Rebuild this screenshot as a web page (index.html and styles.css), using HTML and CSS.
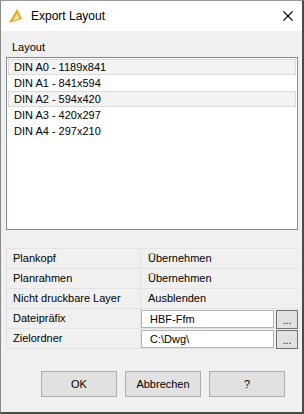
FILE: index.html
```html
<!DOCTYPE html>
<html lang="de">
<head>
    <meta charset="UTF-8">
    <title>Export Layout</title>
    <link rel="stylesheet" href="styles.css">
</head>
<body>
    <div class="window">
        <div class="titlebar">
            <svg class="app-icon" width="16" height="16" viewBox="0 0 16 16">
                <path d="M1 15 L9 1 L14 11 Z" fill="#f0a11c"/>
                <path d="M4.5 13 L9 5 L11.5 10.5 Z" fill="#fbe3b0"/>
            </svg>
            <span class="title">Export Layout</span>
            <svg class="close" width="10" height="10" viewBox="0 0 10 10">
                <path d="M0.5 0.5 L9.5 9.5 M9.5 0.5 L0.5 9.5" stroke="#000" stroke-width="1.1" fill="none"/>
            </svg>
        </div>

        <div class="content">
            <div class="group-label">Layout</div>
            <div class="listbox">
                <div class="list-item selected">DIN A0 - 1189x841</div>
                <div class="list-item">DIN A1 - 841x594</div>
                <div class="list-item selected">DIN A2 - 594x420</div>
                <div class="list-item">DIN A3 - 420x297</div>
                <div class="list-item">DIN A4 - 297x210</div>
            </div>

            <div class="props">
                <div class="prop-row">
                    <div class="prop-name">Plankopf</div>
                    <div class="prop-value">Übernehmen</div>
                </div>
                <div class="prop-row">
                    <div class="prop-name">Planrahmen</div>
                    <div class="prop-value">Übernehmen</div>
                </div>
                <div class="prop-row">
                    <div class="prop-name">Nicht druckbare Layer</div>
                    <div class="prop-value">Ausblenden</div>
                </div>
                <div class="prop-row">
                    <div class="prop-name">Dateipräfix</div>
                    <div class="prop-edit">
                        <div class="textbox">HBF-Ffm</div>
                        <div class="dots">...</div>
                    </div>
                </div>
                <div class="prop-row">
                    <div class="prop-name">Zielordner</div>
                    <div class="prop-edit">
                        <div class="textbox">C:\Dwg\</div>
                        <div class="dots">...</div>
                    </div>
                </div>
            </div>

            <div class="buttons">
                <div class="btn">OK</div>
                <div class="btn">Abbrechen</div>
                <div class="btn">?</div>
            </div>
        </div>
    </div>
</body>
</html>
```

FILE: styles.css
```css
html, body {
    margin: 0;
    padding: 0;
}
body {
    font-family: "Liberation Sans", Arial, sans-serif;
    font-size: 11px;
    color: #000;
    background: #fff;
}
.window {
    width: 304px;
    height: 414px;
    box-sizing: border-box;
    border-top: 1px solid #9a9a9a;
    border-left: 1px solid #8a8a8a;
    border-right: 2px solid #4a4a4a;
    border-bottom: 2px solid #4a4a4a;
    background: #f0f0f0;
    display: flex;
    flex-direction: column;
}
.titlebar {
    height: 30px;
    background: #fff;
    display: flex;
    align-items: center;
    flex-shrink: 0;
}
.app-icon {
    margin-left: 7px;
    margin-top: -1px;
}
.title {
    margin-left: 7px;
    font-size: 12px;
    margin-top: -1px;
}
.close {
    margin-left: auto;
    margin-right: 9px;
    margin-top: -1px;
}
.content {
    padding: 0 4px 0 5px;
    flex: 1;
}
.group-label {
    height: 14px;
    line-height: 14px;
    margin-top: 9px;
    margin-bottom: 3px;
    padding-left: 6px;
}
.listbox {
    height: 170px;
    border: 1px solid #828790;
    background: #fff;
    padding-top: 1px;
}
.list-item {
    height: 16px;
    line-height: 16px;
    padding-left: 6px;
    margin: 0 1px;
    box-sizing: border-box;
}
.list-item.selected {
    background: #f3f3f3;
    border: 1px solid #dadada;
    line-height: 14px;
    padding-left: 5px;
}
.props {
    margin-top: 18px;
    border-top: 1px solid #e3e3e3;
    border-left: 1px solid #e3e3e3;
}
.prop-row {
    height: 20px;
    display: flex;
    border-bottom: 1px solid #e3e3e3;
    box-sizing: border-box;
}
.prop-name {
    width: 134px;
    box-sizing: border-box;
    padding-left: 6px;
    line-height: 19px;
    border-right: 1px solid #e3e3e3;
}
.prop-value {
    padding-left: 7px;
    line-height: 19px;
}
.prop-edit {
    display: flex;
    padding-top: 1px;
}
.textbox {
    width: 133px;
    height: 18px;
    box-sizing: border-box;
    background: #fff;
    border: 1px solid #b4b4b4;
    padding-left: 8px;
    line-height: 16px;
}
.dots {
    width: 22px;
    height: 19px;
    margin-left: 2px;
    box-sizing: border-box;
    background: #e1e1e1;
    border: 1px solid #707070;
    text-align: center;
    line-height: 20px;
    font-size: 10px;
}
.buttons {
    display: flex;
    gap: 8px;
    padding-left: 35px;
    margin-top: 22px;
}
.btn {
    width: 76px;
    height: 26px;
    box-sizing: border-box;
    background: #e1e1e1;
    border: 1px solid #adadad;
    text-align: center;
    line-height: 24px;
}
```
